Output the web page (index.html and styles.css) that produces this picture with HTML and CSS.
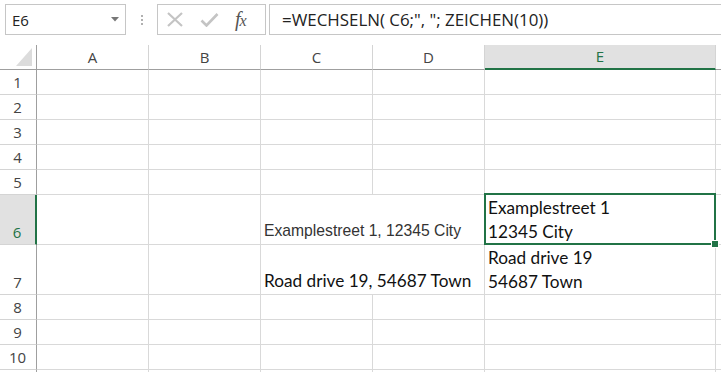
FILE: index.html
```html
<!DOCTYPE html>
<html lang="de">
<head>
    <meta charset="UTF-8">
    <meta name="viewport" content="width=device-width, initial-scale=1.0">
    <title>WECHSELN Beispiel</title>
    <link rel="stylesheet" href="styles.css">
</head>
<body>

    <div class="formula-bar">
        <div class="name-box">
            <span>E6</span>
            <svg class="drop" width="8" height="5" viewBox="0 0 8 5"><path d="M0 0h8L4 4.5z" fill="#777"/></svg>
        </div>
        <div class="grip"><i></i><i></i><i></i></div>
        <div class="fx-buttons">
            <svg width="18" height="15" viewBox="0 0 18 15"><path d="M2 1l14 13M16 1L2 14" stroke="#c4c4c4" stroke-width="2.2" fill="none"/></svg>
            <svg width="19" height="14" viewBox="0 0 19 14"><path d="M1.5 7.5l5 5L17.5 1" stroke="#c4c4c4" stroke-width="2.6" fill="none"/></svg>
            <span class="fx">f<span>x</span></span>
        </div>
        <div class="formula">=WECHSELN( C6;", "; ZEICHEN(10))</div>
    </div>

    <div class="sheet">
        <!-- Kopfzeile -->
        <div class="corner"><svg width="17" height="18" viewBox="0 0 17 18"><path d="M16 0v18H0z" fill="#dcdcdc"/></svg></div>
        <div class="col-head">A</div>
        <div class="col-head">B</div>
        <div class="col-head">C</div>
        <div class="col-head">D</div>
        <div class="col-head active">E</div>
        <div class="col-head"></div>

        <div class="row-head">1</div><div class="cell"></div><div class="cell"></div><div class="cell"></div><div class="cell"></div><div class="cell"></div><div class="cell"></div>
        <div class="row-head">2</div><div class="cell"></div><div class="cell"></div><div class="cell"></div><div class="cell"></div><div class="cell"></div><div class="cell"></div>
        <div class="row-head">3</div><div class="cell"></div><div class="cell"></div><div class="cell"></div><div class="cell"></div><div class="cell"></div><div class="cell"></div>
        <div class="row-head">4</div><div class="cell"></div><div class="cell"></div><div class="cell"></div><div class="cell"></div><div class="cell"></div><div class="cell"></div>
        <div class="row-head">5</div><div class="cell"></div><div class="cell"></div><div class="cell"></div><div class="cell"></div><div class="cell"></div><div class="cell"></div>

        <div class="row-head tall active">6</div>
        <div class="cell tall"></div>
        <div class="cell tall"></div>
        <div class="cell tall wide arial">Examplestreet 1, 12345 City</div>
        <div class="cell tall wrap selected">Examplestreet 1<br>12345 City</div>
        <div class="cell tall"></div>

        <div class="row-head tall">7</div>
        <div class="cell tall"></div>
        <div class="cell tall"></div>
        <div class="cell tall wide">Road drive 19, 54687 Town</div>
        <div class="cell tall wrap">Road drive 19<br>54687 Town</div>
        <div class="cell tall"></div>

        <div class="row-head">8</div><div class="cell"></div><div class="cell"></div><div class="cell"></div><div class="cell"></div><div class="cell"></div><div class="cell"></div>
        <div class="row-head">9</div><div class="cell"></div><div class="cell"></div><div class="cell"></div><div class="cell"></div><div class="cell"></div><div class="cell"></div>
        <div class="row-head">10</div><div class="cell"></div><div class="cell"></div><div class="cell"></div><div class="cell"></div><div class="cell"></div><div class="cell"></div>
        <div class="row-head"></div><div class="cell"></div><div class="cell"></div><div class="cell"></div><div class="cell"></div><div class="cell"></div><div class="cell"></div>
    </div>

</body>
</html>
```

FILE: styles.css
```css
* {
    box-sizing: border-box;
}
body {
    margin: 0;
    background: #fff;
    font-family: "Open Sans", "Noto Sans", sans-serif;
    overflow: hidden;
}

/* Bearbeitungsleiste */
.formula-bar {
    height: 45px;
    display: flex;
    align-items: flex-start;
    padding-top: 4px;
    padding-left: 5px;
}
.name-box {
    width: 121px;
    height: 31px;
    border: 1px solid #c6c6c6;
    display: flex;
    align-items: center;
    justify-content: space-between;
    padding: 0 6px 0 6px;
    font-size: 15px;
    color: #222;
}
.grip {
    width: 31px;
    height: 31px;
    display: flex;
    flex-direction: column;
    align-items: center;
    justify-content: center;
    gap: 2px;
}
.grip i {
    display: block;
    width: 2px;
    height: 2px;
    background: #b0b0b0;
}
.fx-buttons {
    width: 109px;
    height: 31px;
    border: 1px solid #c6c6c6;
    display: flex;
    align-items: center;
    padding-left: 8px;
    gap: 16px;
}
.fx {
    font-family: "Liberation Serif", serif;
    font-style: italic;
    font-size: 20px;
    color: #555;
    letter-spacing: -1px;
}
.fx span {
    font-size: 16px;
}
.formula {
    flex: 1;
    height: 31px;
    margin-left: 3px;
    margin-right: -4px;
    border: 1px solid #c6c6c6;
    padding-left: 12px;
    font-size: 16.9px;
    line-height: 29px;
    color: #222;
}

/* Tabelle */
.sheet {
    display: grid;
    grid-template-columns: 37px 112px 112px 112px 112px 231px 1fr;
    grid-auto-rows: 25px;
}
.corner,
.col-head,
.row-head {
    border-right: 1px solid #d4d4d4;
    border-bottom: 1px solid #d4d4d4;
    color: #444;
    font-size: 15px;
}
.corner {
    border-right-color: #9f9f9f;
    border-bottom-color: #9f9f9f;
    display: flex;
    align-items: flex-end;
    justify-content: flex-end;
    padding: 0 3px 3px 0;
}
.col-head {
    border-bottom-color: #9f9f9f;
    text-align: center;
    line-height: 24px;
}
.row-head {
    border-right-color: #9f9f9f;
    text-align: center;
    line-height: 25px;
    padding-right: 1px;
}
.col-head.active {
    background: #e1e1e1;
    color: #217346;
    border-bottom: 2px solid #217346;
    line-height: 23px;
}
.row-head.active {
    background: #e1e1e1;
    color: #217346;
    border-right: 2px solid #217346;
}
.row-head.tall {
    grid-row: span 2;
    display: flex;
    align-items: flex-end;
    justify-content: center;
    line-height: 24px;
}
.cell {
    border-right: 1px solid #d9d9d9;
    border-bottom: 1px solid #d9d9d9;
    font-family: "Lato", sans-serif;
    font-size: 17.2px;
    color: #111;
    padding: 0 3px 1px 3px;
    white-space: nowrap;
    line-height: 24px;
}
.cell.tall {
    grid-row: span 2;
    display: flex;
    flex-direction: column;
    justify-content: flex-end;
}
.cell.wide {
    grid-column: span 2;
}
.cell.arial {
    font-family: "Liberation Sans", Arial, sans-serif;
    font-size: 15.7px;
    color: #333;
    padding-bottom: 1px;
}
.cell.wrap {
    display: block;
    padding-top: 1px;
}
.cell.selected {
    position: relative;
}
.cell.selected::after {
    content: "";
    position: absolute;
    top: -2px;
    left: -1px;
    right: -1px;
    bottom: -1px;
    border: 2px solid #217346;
}
.cell.selected::before {
    content: "";
    position: absolute;
    right: -4px;
    bottom: -4px;
    width: 6px;
    height: 6px;
    background: #217346;
    border: 1px solid #fff;
    z-index: 2;
}
```
